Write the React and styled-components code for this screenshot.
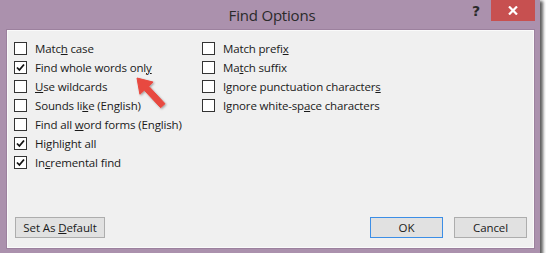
import React from 'react';
import styled, { createGlobalStyle } from 'styled-components';

const Global = createGlobalStyle`
  html, body {
    margin: 0;
    padding: 0;
    background: #ffffff;
  }
  body {
    font-family: "Open Sans", "Noto Sans", sans-serif;
  }
`;

const Window = styled.div`
  position: relative;
  width: 540px;
  height: 253px;
  background: #ab91ad;
  box-shadow: 2px 2px 3px 1px rgba(40, 40, 40, 0.75);
  display: flex;
  flex-direction: column;
`;

const TitleBar = styled.div`
  height: 30px;
  display: flex;
  align-items: flex-start;
  position: relative;
`;

const Title = styled.div`
  flex: 1;
  text-align: center;
  font-size: 15px;
  line-height: 30px;
  color: #2a2a2a;
  padding-left: 4px;
  letter-spacing: -0.2px;
`;

const Help = styled.div`
  position: absolute;
  left: 472px;
  top: 3px;
  font-size: 14px;
  font-weight: bold;
  color: #2a2a2a;
  font-family: "DejaVu Sans", sans-serif;
`;

const CloseButton = styled.div`
  position: absolute;
  left: 491px;
  top: 0;
  width: 44px;
  height: 21px;
  background: #c75050;
  display: flex;
  align-items: center;
  justify-content: center;
`;

const Client = styled.div`
  position: relative;
  margin: 0 6px 5px 7px;
  flex: 1;
  background: #f0f0f0;
  border: 1px solid #fafafa;
  outline: 1px solid #9c819e;
  display: flex;
  flex-direction: column;
  padding: 8px 6px 9px 6px;
`;

const Columns = styled.div`
  display: flex;
`;

const Column = styled.div`
  width: ${p => p.$w}px;
  display: flex;
  flex-direction: column;
`;

const Row = styled.label`
  height: 19px;
  display: flex;
  align-items: center;
  font-size: 11.5px;
  color: #1a1a1a;
  letter-spacing: -0.15px;
`;

const Box = styled.span`
  width: 11px;
  height: 11px;
  border: 1px solid #333333;
  background: #ffffff;
  margin-right: 8px;
  display: flex;
  align-items: center;
  justify-content: center;
  flex: none;
`;

const Footer = styled.div`
  margin-top: auto;
  display: flex;
  align-items: center;
  padding-left: 1px;
`;

const Button = styled.div`
  width: ${p => p.$w}px;
  height: 19px;
  box-sizing: content-box;
  border: 1px solid ${p => (p.$primary ? '#3c8ee6' : '#adadad')};
  background: #e1e1e1;
  font-size: 11.5px;
  letter-spacing: -0.1px;
  color: #1a1a1a;
  display: flex;
  align-items: center;
  justify-content: center;
  margin-left: ${p => p.$ml || '0'};
`;

const Arrow = styled.svg`
  position: absolute;
  left: 124px;
  top: 42px;
  overflow: visible;
`;

const Check = () => (
  <svg width="9" height="9" viewBox="0 0 9 9">
    <path d="M1 4.5 L3.4 7 L8 1.5" fill="none" stroke="#111" strokeWidth="1.8" />
  </svg>
);

const Option = ({ checked, children }) => (
  <Row>
    <Box>{checked && <Check />}</Box>
    <span>{children}</span>
  </Row>
);

const left = [
  [false, <>Matc<u>h</u> case</>],
  [true, <>Find whole words onl<u>y</u></>],
  [false, <><u>U</u>se wildcards</>],
  [false, <>Sounds li<u>k</u>e (English)</>],
  [false, <>Find all <u>w</u>ord forms (English)</>],
  [true, <>Highli<u>g</u>ht all</>],
  [true, <>In<u>c</u>remental find</>],
];

const right = [
  [false, <>Match prefi<u>x</u></>],
  [false, <>Ma<u>t</u>ch suffix</>],
  [false, <>Ignore punctuation character<u>s</u></>],
  [false, <>Ignore white-sp<u>a</u>ce characters</>],
];

const App = () => (
  <>
    <Global />
    <Window>
      <TitleBar>
        <Title>Find Options</Title>
        <Help>?</Help>
        <CloseButton>
          <svg width="10" height="9" viewBox="0 0 10 9">
            <path d="M1 0.5 L9 8.5 M9 0.5 L1 8.5" stroke="#fff" strokeWidth="2.2" />
          </svg>
        </CloseButton>
      </TitleBar>
      <Client>
        <Columns>
          <Column $w={188}>
            {left.map(([c, t], i) => <Option key={i} checked={c}>{t}</Option>)}
          </Column>
          <Column $w={300}>
            {right.map(([c, t], i) => <Option key={i} checked={c}>{t}</Option>)}
          </Column>
        </Columns>
        <Footer>
          <Button $w={88}><span>Set As <u>D</u>efault</span></Button>
          <Button $w={71} $primary $ml="auto"><span>OK</span></Button>
          <Button $w={71} $ml="11px"><span>Cancel</span></Button>
        </Footer>
        <Arrow width="40" height="40" viewBox="0 0 40 40">
          <defs>
            <filter id="sh" x="-30%" y="-30%" width="160%" height="160%">
              <feDropShadow dx="1" dy="1" stdDeviation="1" floodColor="#000" floodOpacity="0.35" />
            </filter>
          </defs>
          <polygon
            filter="url(#sh)"
            fill="#e8483f"
            strokeLinejoin="round"
            stroke="#e8483f"
            strokeWidth="1"
            points="5,5 21.1,9.1 16.7,13.2 33,30.7 28.6,34.7 12.3,17.2 7.9,21.3"
          />
        </Arrow>
      </Client>
    </Window>
  </>
);

export default App;
